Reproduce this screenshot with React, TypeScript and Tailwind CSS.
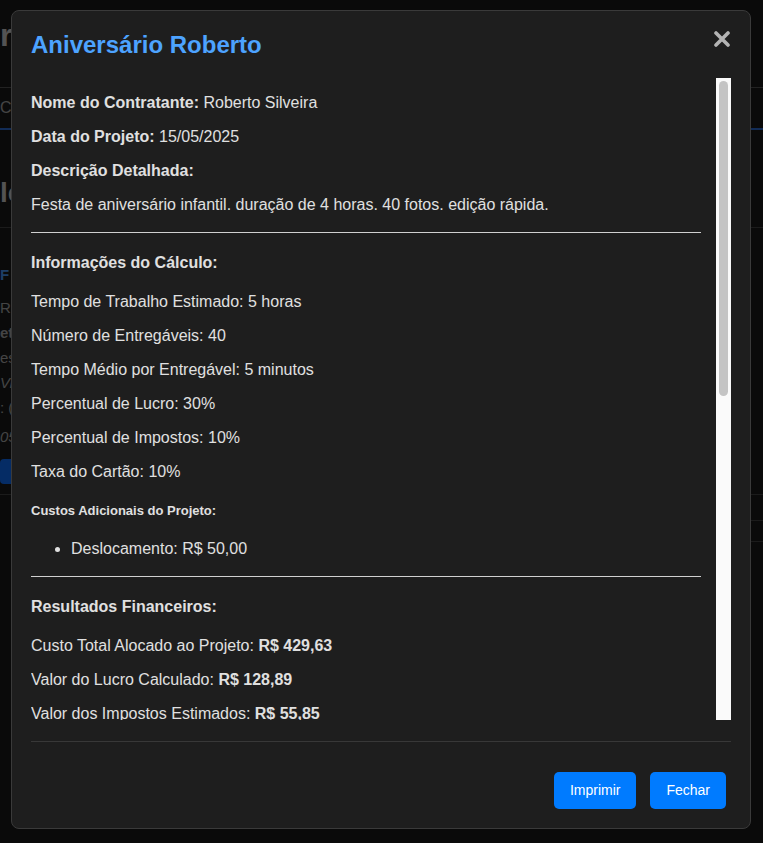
const calc = [
  "Tempo de Trabalho Estimado: 5 horas",
  "Número de Entregáveis: 40",
  "Tempo Médio por Entregável: 5 minutos",
  "Percentual de Lucro: 30%",
  "Percentual de Impostos: 10%",
  "Taxa do Cartão: 10%",
];

const results: [string, string][] = [
  ["Custo Total Alocado ao Projeto:", "R$ 429,63"],
  ["Valor do Lucro Calculado:", "R$ 128,89"],
  ["Valor dos Impostos Estimados:", "R$ 55,85"],
  ["Valor da Taxa do Cartão:", "R$ 68,26"],
  ["Preço Final Sugerido:", "R$ 682,63"],
];

const breakdown: [string, string][] = [
  ["Custo das Horas Trabalhadas:", "R$ 250,00"],
  ["Custo de Edição dos Entregáveis:", "R$ 83,33"],
  ["Custos Fixos Rateados:", "R$ 46,30"],
  ["Custos Adicionais:", "R$ 50,00"],
];

function BackgroundPage() {
  return (
    <div className="text-[#cfcfcf]">
      <div className="h-[88px] border-b border-[#555] pt-[16px]">
        <h1 className="text-[32px] leading-[38px] font-bold">r</h1>
      </div>
      <div className="flex h-[42px] items-center border-b-2 border-[#2f6fd6]">
        <span className="text-[16px] text-[#aaa]">Cu</span>
      </div>
      <div className="h-[98px] border-b border-[#444] pt-[46px]">
        <h2 className="text-[28px] leading-[34px] font-bold">le</h2>
      </div>
      <div className="pt-[34px] text-[15px] leading-[25px]">
        <p className="font-bold text-[#4d9bff]">F</p>
        <p className="mt-[8px] text-[#aaa]">R</p>
        <p className="font-bold text-[#aaa]">ete</p>
        <p className="text-[#aaa]">es</p>
        <p className="italic text-[#aaa]">Vi</p>
        <p className="text-[#aaa]">: (</p>
        <p className="mt-[4px] italic text-[#aaa]">05</p>
        <div className="mt-[10px] h-[25px] w-[40px] rounded bg-[#0d6efd]" />
      </div>
      <div className="mt-[10px] border-b border-[#444]" />
      <div className="ml-auto w-[40px]">
        <div className="h-[26px] border-b border-[#444]" />
        <div className="h-[21px] border-b border-[#444]" />
      </div>
    </div>
  );
}

export default function App() {
  return (
    <div className="relative h-[843px] w-full overflow-hidden bg-[#1a1a1a] font-['Liberation_Sans',Arial,sans-serif]">
      <BackgroundPage />
      <div className="absolute inset-0 bg-black/60">
        <div className="mt-[10px] ml-[11px] flex h-[819px] w-[740px] flex-col rounded-lg border border-[#3a3a3a] bg-[#1e1e1e] p-[19px] text-[#e0e0e0]">
          <div className="mb-[19px] flex h-[29px] items-start justify-between">
            <h2 className="text-[24px] leading-[29px] font-bold text-[#4da3ff]">Aniversário Roberto</h2>
            <button className="mt-[1px] mr-[1px] text-[#b3b3b3]" aria-label="Fechar">
              <svg width="16" height="16" viewBox="0 0 16 16">
                <path d="M2 2 L14 14 M14 2 L2 14" stroke="currentColor" strokeWidth="3.6" strokeLinecap="round" />
              </svg>
            </button>
          </div>

          <div className="flex h-[642px]">
            <div className="min-w-0 flex-1 overflow-hidden pr-[15px] text-[16px] leading-[18px]">
              <p className="my-4">
                <strong>Nome do Contratante:</strong> Roberto Silveira
              </p>
              <p className="my-4">
                <strong>Data do Projeto:</strong> 15/05/2025
              </p>
              <p className="my-4">
                <strong>Descrição Detalhada:</strong>
              </p>
              <p className="my-4">Festa de aniversário infantil. duração de 4 horas. 40 fotos. edição rápida.</p>
              <hr className="my-[18px] border-t border-[#d0d0d0]" />

              <h4 className="my-[21px] font-bold">Informações do Cálculo:</h4>
              {calc.map((line) => (
                <p key={line} className="my-4">{line}</p>
              ))}
              <h5 className="my-[22px] text-[13px] leading-[15px] font-bold">Custos Adicionais do Projeto:</h5>
              <ul className="my-4 list-disc pl-10">
                <li>Deslocamento: R$ 50,00</li>
              </ul>
              <hr className="my-[18px] border-t border-[#d0d0d0]" />

              <h4 className="my-[21px] font-bold">Resultados Financeiros:</h4>
              {results.map(([k, v]) => (
                <p key={k} className="my-4">
                  {k} <strong>{v}</strong>
                </p>
              ))}
              <hr className="my-[18px] border-t border-[#d0d0d0]" />

              <h4 className="my-[21px] font-bold">Detalhamento dos Custos:</h4>
              {breakdown.map(([k, v]) => (
                <p key={k} className="my-4">
                  {k} <strong>{v}</strong>
                </p>
              ))}
            </div>
            {/* scrollbar */}
            <div className="w-[15px] shrink-0 bg-[#fafafa] px-[3px] pt-[3px]">
              <div className="h-[315px] rounded-full bg-[#c4c4c4]" />
            </div>
          </div>

          <div className="mt-[21px] flex justify-end gap-[14px] border-t border-[#383838] pt-[30px] pr-[5px]">
            <button className="h-[37px] rounded-[5px] bg-[#007bff] px-4 text-[14px] text-white">Imprimir</button>
            <button className="h-[37px] rounded-[5px] bg-[#007bff] px-4 text-[14px] text-white">Fechar</button>
          </div>
        </div>
      </div>
    </div>
  );
}
